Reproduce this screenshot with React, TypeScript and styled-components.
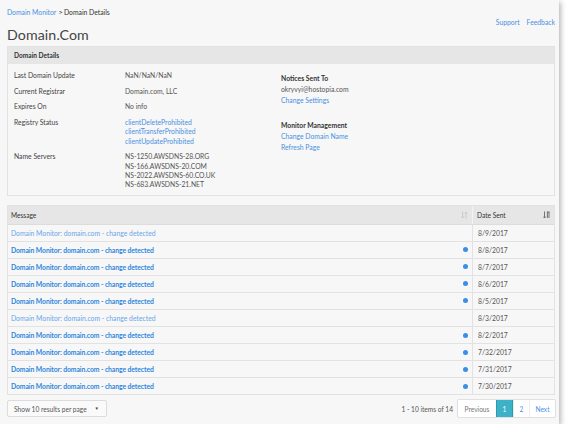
import React from 'react'
import styled, { createGlobalStyle } from 'styled-components'

const GlobalStyle = createGlobalStyle`
  html, body {
    margin: 0;
    padding: 0;
    background: #ffffff;
  }
  body {
    font-family: Lato, 'Open Sans', sans-serif;
    color: #444;
  }
`

interface Message {
  date: string
  unread: boolean
}

const messages: Message[] = [
  { date: '8/9/2017', unread: false },
  { date: '8/8/2017', unread: true },
  { date: '8/7/2017', unread: true },
  { date: '8/6/2017', unread: true },
  { date: '8/5/2017', unread: true },
  { date: '8/3/2017', unread: false },
  { date: '8/2/2017', unread: true },
  { date: '7/32/2017', unread: true },
  { date: '7/31/2017', unread: true },
  { date: '7/30/2017', unread: true },
]

const SortIcon = ({ active }: { active?: boolean }) => (
  <svg width="7" height="8" viewBox="0 0 7 8">
    {active ? (
      <g fill="none" stroke="#666" strokeWidth="0.9">
        <path d="M1.5 0.5 V7 M0.2 5.6 L1.5 7 L2.8 5.6" />
        <path d="M3.8 1 H6.6 M4.4 1 V7 M6 1 V7" />
      </g>
    ) : (
      <g fill="none" stroke="#c4c4c4" strokeWidth="0.9">
        <path d="M1.6 0.5 V7 M0.3 5.6 L1.6 7 L2.9 5.6" />
        <path d="M5 7.5 V1 M3.7 2.4 L5 1 L6.3 2.4" />
      </g>
    )}
  </svg>
)

const App: React.FC = () => {
  return (
    <>
      <GlobalStyle />
      <Card>
        <Breadcrumb>
          <BlueLink>Domain Monitor</BlueLink>
          <Chevron>&gt;</Chevron>
          <span>Domain Details</span>
        </Breadcrumb>
        <TitleRow>
          <Title>Domain.Com</Title>
          <HelpLinks>
            <BlueLink>Support</BlueLink>
            <BlueLink>Feedback</BlueLink>
          </HelpLinks>
        </TitleRow>

        <Panel>
          <PanelHeader>Domain Details</PanelHeader>
          <DetailsBody>
            <DetailsList>
              <DetailRow>
                <Label>Last Domain Update</Label>
                <Value>NaN/NaN/NaN</Value>
              </DetailRow>
              <DetailRow>
                <Label>Current Registrar</Label>
                <Value>Domain.com, LLC</Value>
              </DetailRow>
              <DetailRow>
                <Label>Expires On</Label>
                <Value>No info</Value>
              </DetailRow>
              <DetailRow>
                <Label>Registry Status</Label>
                <Value>
                  <BlueLink>clientDeleteProhibited</BlueLink>
                  <BlueLink>clientTransferProhibited</BlueLink>
                  <BlueLink>clientUpdateProhibited</BlueLink>
                </Value>
              </DetailRow>
              <DetailRow>
                <Label>Name Servers</Label>
                <Value>
                  <span>NS-1250.AWSDNS-28.ORG</span>
                  <span>NS-166.AWSDNS-20.COM</span>
                  <span>NS-2022.AWSDNS-60.CO.UK</span>
                  <span>NS-683.AWSDNS-21.NET</span>
                </Value>
              </DetailRow>
            </DetailsList>
            <SideColumn>
              <SideGroup>
                <SideTitle>Notices Sent To</SideTitle>
                <span>okryvyi@hostopia.com</span>
                <BlueLink>Change Settings</BlueLink>
              </SideGroup>
              <SideGroup>
                <SideTitle>Monitor Management</SideTitle>
                <BlueLink>Change Domain Name</BlueLink>
                <BlueLink>Refresh Page</BlueLink>
              </SideGroup>
            </SideColumn>
          </DetailsBody>
        </Panel>

        <Table>
          <HeaderRow>
            <HeadCell>
              Message
              <SortIcon />
            </HeadCell>
            <HeadCell $divider>
              Date Sent
              <SortIcon active />
            </HeadCell>
          </HeaderRow>
          {messages.map((m, i) => (
            <Row key={i}>
              <MessageCell>
                <MessageLink $unread={m.unread}>
                  Domain Monitor: domain.com - change detected
                </MessageLink>
                {m.unread && <Dot />}
              </MessageCell>
              <DateCell>{m.date}</DateCell>
            </Row>
          ))}
        </Table>

        <Footer>
          <PageSize>
            Show 10 results per page
            <Caret>&#9660;</Caret>
          </PageSize>
          <PagerWrap>
            <ItemsCount>1 - 10 items of 14</ItemsCount>
            <Pager>
              <PageButton $w={38}>Previous</PageButton>
              <PageButton $w={17} $active>
                1
              </PageButton>
              <PageButton $w={16}>2</PageButton>
              <PageButton $w={26}>Next</PageButton>
            </Pager>
          </PagerWrap>
        </Footer>
      </Card>
    </>
  )
}

const Card = styled.div`
  width: 559px;
  height: 424px;
  box-sizing: border-box;
  background: #f7f7f7;
  box-shadow: 2px 2px 5px rgba(0, 0, 0, 0.28);
  padding: 6px 4px 0 7px;
  font-size: 6.8px;
`

const BlueLink = styled.span`
  display: block;
  color: #4a90e2;
  cursor: pointer;
`

const Breadcrumb = styled.div`
  display: flex;
  align-items: center;
  font-size: 6.8px;
  height: 11px;
  color: #333;

  ${BlueLink} {
    display: inline;
  }
`

const Chevron = styled.span`
  margin: 0 1px 0 2px;
  font-size: 8px;
  color: #333;
`

const TitleRow = styled.div`
  display: flex;
  justify-content: space-between;
  align-items: flex-start;
  height: 29px;
`

const Title = styled.h1`
  margin: 9px 0 0;
  font-size: 14.2px;
  font-weight: 400;
  color: #444;
  letter-spacing: 0.1px;
`

const HelpLinks = styled.div`
  display: flex;
  gap: 7px;
  margin-top: 1px;
  font-size: 6.8px;
`

const Panel = styled.div`
  border: 1px solid #e2e2e2;
  background: #f7f7f7;
`

const PanelHeader = styled.div`
  height: 17px;
  line-height: 17px;
  background: #e6e6e6;
  padding-left: 6px;
  font-size: 6.6px;
  font-weight: 700;
  color: #333;
`

const DetailsBody = styled.div`
  display: flex;
  padding: 7px 6px 5px 6px;
  min-height: 118px;
`

const DetailsList = styled.div`
  display: flex;
  flex-direction: column;
  gap: 6.4px;
  width: 267px;
`

const DetailRow = styled.div`
  display: flex;
  line-height: 9.3px;
`

const Label = styled.div`
  width: 111px;
  color: #444;
`

const Value = styled.div`
  display: flex;
  flex-direction: column;
  color: #555;
`

const SideColumn = styled.div`
  display: flex;
  flex-direction: column;
  gap: 13px;
  padding-top: 2px;
  line-height: 11.2px;
  color: #555;
`

const SideGroup = styled.div`
  display: flex;
  flex-direction: column;
`

const SideTitle = styled.div`
  color: #333;
  font-weight: 700;
`

const Table = styled.div`
  margin-top: 9px;
  border: 1px solid #e2e2e2;
  border-bottom: none;
`

const HeaderRow = styled.div`
  display: grid;
  grid-template-columns: 1fr 82px;
  height: 18px;
  background: #e6e6e6;
  border-bottom: 1px solid #dcdcdc;
`

const HeadCell = styled.div<{ $divider?: boolean }>`
  display: flex;
  align-items: center;
  justify-content: space-between;
  padding: 0 4px 0 3px;
  font-size: 6.6px;
  color: #333;
  border-left: ${(p) => (p.$divider ? '1px solid #f3f3f3' : 'none')};
  ${(p) => (p.$divider ? 'padding-left: 4px;' : '')}
`

const Row = styled.div`
  display: grid;
  grid-template-columns: 1fr 82px;
  height: 16.1px;
  border-bottom: 1px solid #e2e2e2;
`

const MessageCell = styled.div`
  display: flex;
  align-items: center;
  justify-content: space-between;
  padding: 0 4px 0 3px;
`

const MessageLink = styled.span<{ $unread: boolean }>`
  color: ${(p) => (p.$unread ? '#2d86dc' : '#6aa6e8')};
  font-weight: ${(p) => (p.$unread ? 700 : 400)};
  letter-spacing: ${(p) => (p.$unread ? '-0.08px' : '0')};
`

const Dot = styled.span`
  width: 5px;
  height: 5px;
  border-radius: 50%;
  background: #3a8ee6;
`

const DateCell = styled.div`
  display: flex;
  align-items: center;
  padding-left: 5px;
  border-left: 1px solid #e2e2e2;
  color: #555;
`

const Footer = styled.div`
  display: flex;
  justify-content: space-between;
  align-items: center;
  margin-top: 4px;
`

const PageSize = styled.div`
  width: 100px;
  height: 17px;
  box-sizing: border-box;
  display: flex;
  align-items: center;
  justify-content: space-between;
  padding: 0 7px 0 6px;
  border: 1px solid #dcdcdc;
  border-radius: 2px;
  background: #fafafa;
  color: #555;
  font-size: 6.6px;
  white-space: nowrap;
`

const Caret = styled.span`
  font-size: 4.5px;
  color: #444;
`

const PagerWrap = styled.div`
  display: flex;
  align-items: center;
  gap: 4px;
  margin-right: -1px;
`

const ItemsCount = styled.span`
  color: #555;
  font-size: 6.6px;
`

const Pager = styled.div`
  display: flex;
  height: 17px;
  border: 1px solid #e0e0e0;
  border-radius: 2px;
  background: #fff;
`

const PageButton = styled.div<{ $w: number; $active?: boolean }>`
  width: ${(p) => p.$w}px;
  box-sizing: border-box;
  display: flex;
  align-items: center;
  justify-content: center;
  font-size: 6.6px;
  color: ${(p) => (p.$active ? '#fff' : '#4a90e2')};
  background: ${(p) => (p.$active ? '#3cb1c8' : 'transparent')};
  border-left: 1px solid ${(p) => (p.$active ? '#2a9ab2' : '#ececec')};
  ${(p) => (p.$active ? 'border-right: 1px solid #2a9ab2;' : '')}

  &:first-child {
    border-left: none;
    color: #777;
  }
`

export default App
